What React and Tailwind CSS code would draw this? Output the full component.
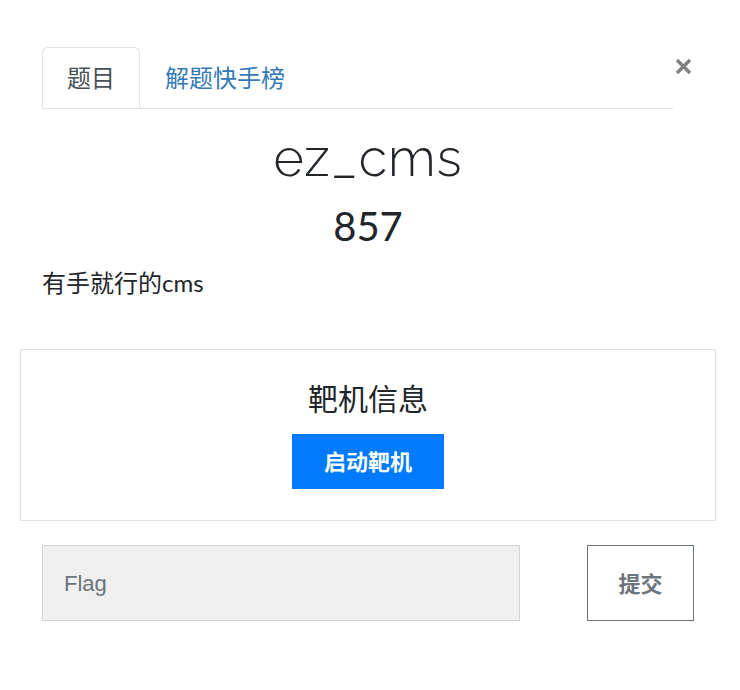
import React from "react";

export default function App() {
  return (
    <div
      className="w-[740px] h-[690px] bg-white relative"
      style={{ fontFamily: 'Lato, "Noto Sans CJK SC", sans-serif' }}
    >
      <div className="pt-[47px] pl-[42px] pr-[46px]">
        <div className="flex items-start">
          <ul className="flex w-[631px] border-b border-[#dee2e6]">
            <li className="-mb-px h-[61px] px-[24px] flex items-center border border-[#dee2e6] border-b-white rounded-t-[6px] text-[24px] text-[#495057]">
              题目
            </li>
            <li className="h-[61px] px-[25px] flex items-center text-[24px] text-[#337ab7]">
              解题快手榜
            </li>
          </ul>
          <button className="absolute left-[675px] top-[58px] w-[17px] h-[17px]">
            <svg width="17" height="17" viewBox="0 0 17 17">
              <path d="M2 2 L15 15 M15 2 L2 15" stroke="#808080" strokeWidth="3.4" />
            </svg>
          </button>
        </div>

        <div className="text-center mt-[18px]">
          <h3
            className="text-[52px] leading-[62px] font-light text-[#212529] tracking-[1px]"
            style={{ fontFamily: 'Raleway, Lato, sans-serif' }}
          >
            ez_cms
          </h3>
          <h4 className="text-[40px] leading-[48px] text-[#212529] mt-[13px]">857</h4>
        </div>

        <p className="mt-[17px] text-[24px] leading-[32px] text-[#212529]">有手就行的cms</p>

        <div className="mx-[-22px] mt-[50px] h-[172px] border border-[#dfdfdf] flex flex-col items-center">
          <div className="mt-[28px] text-[30px] leading-[40px] text-[#212529]">靶机信息</div>
          <button className="mt-[16px] w-[152px] h-[55px] bg-[#007bff] text-white text-[22px] font-bold">
            启动靶机
          </button>
        </div>

        <div className="mt-[24px] flex justify-between">
          <div className="w-[478px] h-[76px] bg-[#efefef] border border-[#ced4da] flex items-center pl-[21px]">
            <span
              className="text-[22px] text-[#6c757d]"
              style={{ fontFamily: '"Liberation Sans", Arial, sans-serif' }}
            >
              Flag
            </span>
          </div>
          <button className="w-[107px] h-[76px] border border-[#6c757d] text-[22px] font-bold text-[#6c757d]">
            提交
          </button>
        </div>
      </div>
    </div>
  );
}
